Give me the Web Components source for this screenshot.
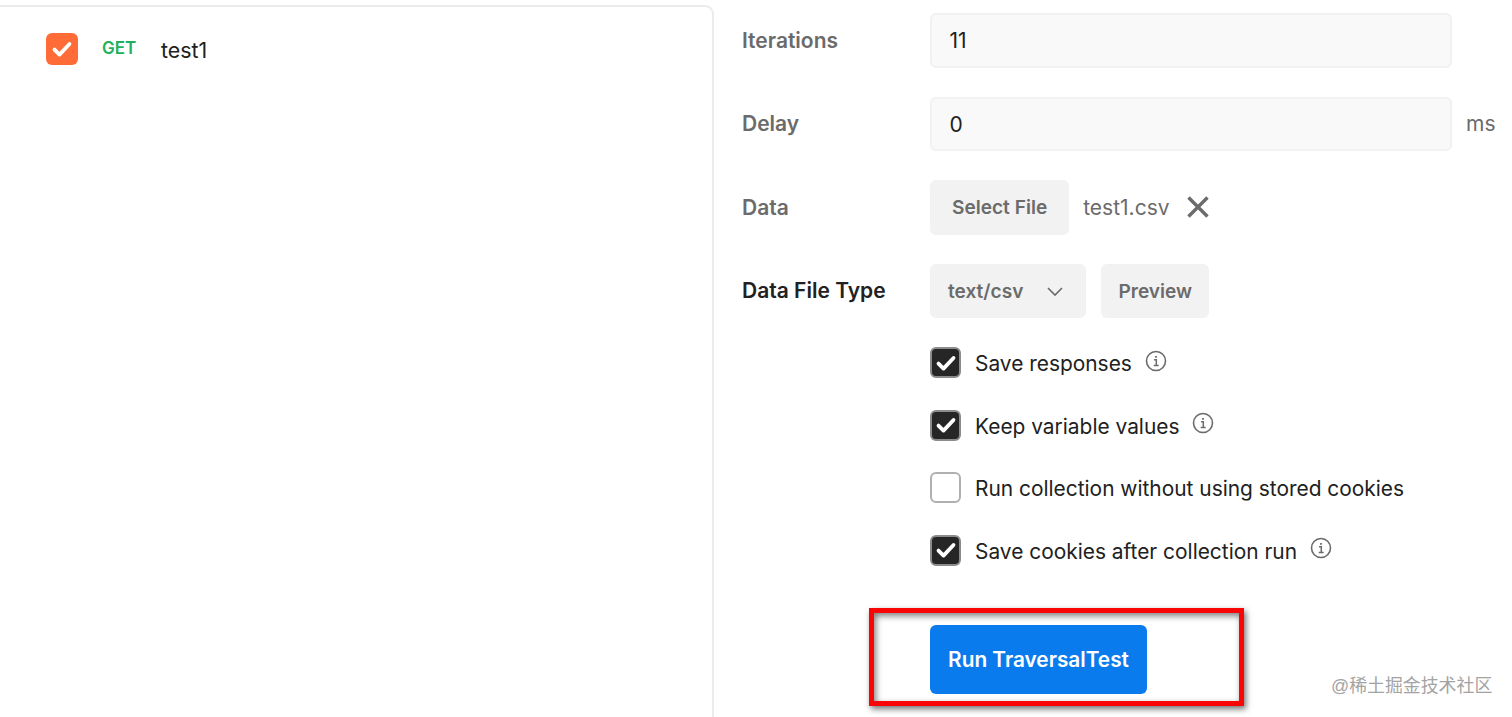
<!DOCTYPE html>
<html lang="en">
<head>
<meta charset="utf-8">
<title>Runner</title>
<style>
  html, body { margin: 0; height: 717px; overflow: hidden; background: #fff; }
  body { font-family: Inter, "Noto Sans CJK SC", sans-serif; }
</style>
</head>
<body>
<runner-page>
  <request-row slot="requests" method="GET" name="test1"></request-row>

  <form-row label="Iterations"><text-field value="11"></text-field></form-row>
  <form-row label="Delay"><text-field value="0" unit="ms"></text-field></form-row>
  <form-row label="Data">
    <soft-button>Select File</soft-button>
    <file-name>test1.csv</file-name>
  </form-row>
  <form-row label="Data File Type" strong>
    <soft-button chevron>text/csv</soft-button>
    <soft-button small>Preview</soft-button>
  </form-row>

  <check-row slot="checks" checked info>Save responses</check-row>
  <check-row slot="checks" checked info>Keep variable values</check-row>
  <check-row slot="checks">Run collection without using stored cookies</check-row>
  <check-row slot="checks" checked info>Save cookies after collection run</check-row>

  <run-button slot="run">Run TraversalTest</run-button>
</runner-page>

<script>
const CHECK = `<svg viewBox="0 0 24 24" width="24" height="24" fill="none" stroke="#fff" stroke-width="3.8" stroke-linecap="round" stroke-linejoin="round"><path d="M4.5 12.6l5 5L19.5 7"/></svg>`;

class RunnerPage extends HTMLElement {
  connectedCallback() {
    this.attachShadow({mode:'open'}).innerHTML = `
      <style>
        :host { display:flex; height:717px; position:relative; overflow:hidden; background:#fff; }
        .requests {
          box-sizing:border-box; width:714px; margin-top:5px;
          border-top:2px solid #ebebeb; border-right:2px solid #ebebeb;
          border-top-right-radius:9px; padding-top:26px;
        }
        .config { flex:1; padding:13px 0 0 28px; display:flex; flex-direction:column; }
        .fields { display:flex; flex-direction:column; gap:29px; }
        .checks { display:flex; flex-direction:column; gap:31.6px; margin:29px 0 0 188px; }
        .run { margin:59px 0 0 188px; display:flex; }
        .mark {
          position:absolute; left:869px; top:608px; width:375px; height:98px;
          box-sizing:border-box; border:5px solid #fa0505;
          box-shadow:2px 3px 6px rgba(0,0,0,.55), inset 2px 3px 6px rgba(0,0,0,.5);
          pointer-events:none;
        }
        .water {
          position:absolute; left:1331px; top:676px; font-size:17.9px; line-height:20px;
          color:#a3a3a3; white-space:nowrap;
          font-family:"Liberation Sans","Noto Sans CJK SC",sans-serif;
        }
      </style>
      <section class="requests"><slot name="requests"></slot></section>
      <section class="config">
        <div class="fields"><slot></slot></div>
        <div class="checks"><slot name="checks"></slot></div>
        <div class="run"><slot name="run"></slot></div>
      </section>
      <div class="mark"></div>
      <div class="water">@稀土掘金技术社区</div>
    `;
  }
}

class RequestRow extends HTMLElement {
  connectedCallback() {
    this.attachShadow({mode:'open'}).innerHTML = `
      <style>
        :host { display:flex; align-items:center; height:32px; padding-left:46px; }
        .box { width:32px; height:32px; border-radius:6px; background:#ff6c37; display:flex; align-items:center; justify-content:center; }
        .method { margin-left:24px; width:59px; font-size:17px; font-weight:600; color:#20b05c; padding-bottom:2px; }
        .name { font-size:21.4px; color:#212121; padding-top:2px; }
      </style>
      <div class="box">${CHECK}</div>
      <span class="method">${this.getAttribute('method')}</span>
      <span class="name">${this.getAttribute('name')}</span>
    `;
  }
}

class FormRow extends HTMLElement {
  connectedCallback() {
    const strong = this.hasAttribute('strong');
    this.attachShadow({mode:'open'}).innerHTML = `
      <style>
        :host { display:flex; align-items:center; height:54.5px; }
        .label { width:188px; flex:none; font-size:21px; font-weight:600; color:${strong ? '#212121' : '#6b6b6b'}; }
        .ctl { flex:1; display:flex; align-items:center; gap:14px; height:100%; }
      </style>
      <div class="label">${this.getAttribute('label')}</div>
      <div class="ctl"><slot></slot></div>
    `;
  }
}

class TextField extends HTMLElement {
  connectedCallback() {
    const unit = this.getAttribute('unit');
    this.attachShadow({mode:'open'}).innerHTML = `
      <style>
        :host { display:flex; align-items:center; height:100%; }
        .input {
          box-sizing:border-box; width:522px; height:100%; padding:1px 0 0 17.5px;
          display:flex; align-items:center;
          background:#f9f9f9; border:2px solid #f1f1f1; border-radius:6px;
          font-size:21px; color:#212121;
        }
        .unit { margin-left:14px; font-size:21px; color:#6b6b6b; }
      </style>
      <div class="input">${this.getAttribute('value')}</div>
      ${unit ? `<span class="unit">${unit}</span>` : ''}
    `;
  }
}

class SoftButton extends HTMLElement {
  connectedCallback() {
    const chev = this.hasAttribute('chevron');
    const small = this.hasAttribute('small');
    this.attachShadow({mode:'open'}).innerHTML = `
      <style>
        :host {
          display:flex; align-items:center; height:100%; box-sizing:border-box;
          padding:0 ${chev ? '22px' : small ? '17px' : '22px'} 0 ${chev ? '18px' : small ? '17px' : '22px'};
          margin-left:${small ? '1px' : '0'};
          background:#f2f2f2; border-radius:6px;
          font-size:19.1px; font-weight:600; color:#6b6b6b; white-space:nowrap;
        }
        svg { margin-left:23px; }
      </style>
      <slot></slot>
      ${chev ? `<svg width="18" height="18" viewBox="0 0 18 18" fill="none" stroke="#6b6b6b" stroke-width="1.6"><path d="M2 6l7 7L16 6"/></svg>` : ''}
    `;
  }
}

class FileName extends HTMLElement {
  connectedCallback() {
    this.attachShadow({mode:'open'}).innerHTML = `
      <style>
        :host { display:flex; align-items:center; font-size:21px; color:#6b6b6b; }
        svg { margin-left:16px; }
      </style>
      <slot></slot>
      <svg width="24" height="24" viewBox="0 0 24 24" fill="none" stroke="#6b6b6b" stroke-width="3.4"><path d="M2.500 2.500l19 19M21.500 2.500l-19 19"/></svg>
    `;
  }
}

class CheckRow extends HTMLElement {
  connectedCallback() {
    const on = this.hasAttribute('checked');
    this.attachShadow({mode:'open'}).innerHTML = `
      <style>
        :host { display:flex; align-items:center; height:31px; font-size:20.9px; color:#212121; white-space:nowrap; }
        .box {
          box-sizing:border-box; width:31px; height:31px; border-radius:6px; flex:none;
          display:flex; align-items:center; justify-content:center; margin-right:14px;
          border:2px solid ${on ? '#8c8c8c' : '#b0b0b0'}; background:${on ? '#262626' : '#fff'};
        }
        .text { padding-top:2px; }
        .info { margin-left:13px; margin-bottom:4px; display:flex; }
      </style>
      <div class="box">${on ? CHECK : ''}</div>
      <span class="text"><slot></slot></span>
      ${this.hasAttribute('info') ? `<span class="info"><svg width="22" height="22" viewBox="0 0 22 22" fill="none" stroke="#6b6b6b" stroke-width="1.6"><circle cx="11" cy="11" r="9.500"/><path d="M9 9.700h2.300v5.600M8.700 15.500h5" stroke-width="1.500"/><path d="M11 6v1.800" stroke-width="1.800"/></svg></span>` : ''}
    `;
  }
}

class RunButton extends HTMLElement {
  connectedCallback() {
    this.attachShadow({mode:'open'}).innerHTML = `
      <style>
        :host {
          display:flex; align-items:center; justify-content:center;
          box-sizing:border-box; width:217px; height:69px; border-radius:6px;
          background:#097bed; color:#fff; font-size:20.8px; font-weight:600; white-space:nowrap;
        }
      </style>
      <slot></slot>
    `;
  }
}

customElements.define('runner-page', RunnerPage);
customElements.define('request-row', RequestRow);
customElements.define('form-row', FormRow);
customElements.define('text-field', TextField);
customElements.define('soft-button', SoftButton);
customElements.define('file-name', FileName);
customElements.define('check-row', CheckRow);
customElements.define('run-button', RunButton);
</script>
</body>
</html>
